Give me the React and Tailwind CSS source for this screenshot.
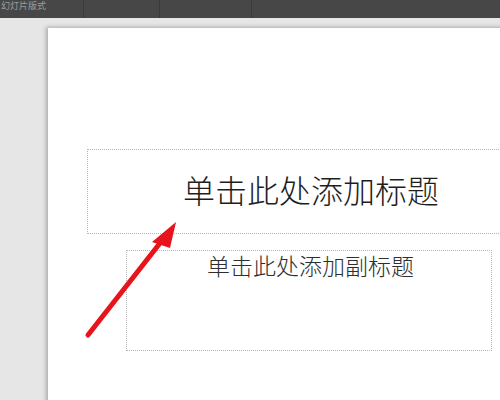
import React from "react";

const cjk = { fontFamily: '"Noto Sans CJK SC", "Noto Sans", sans-serif' };

const App = () => {
  return (
    <div className="w-[500px] h-[400px] overflow-hidden flex flex-col bg-[#e6e6e6]" style={cjk}>
      {/* Top toolbar strip */}
      <div className="h-[18px] shrink-0 bg-[#474747] flex">
        <div className="w-[84px] border-r border-[#3a3a3a]">
          <span className="block text-[9px] leading-[12px] text-[#9e9e9e] whitespace-nowrap pl-[1px]">
            幻灯片版式
          </span>
        </div>
        <div className="w-[76px] border-r border-[#3a3a3a]" />
        <div className="w-[92px] border-r border-[#3a3a3a]" />
        <div className="flex-1" />
      </div>

      {/* Workspace */}
      <div className="flex-1 pl-[48px] pt-[10px] overflow-hidden">
        <div className="relative w-[480px] h-[400px] bg-white shadow-[-2px_-1px_4px_rgba(0,0,0,0.25)] pt-[121px] pl-[39px]">
          {/* Title placeholder */}
          <div className="w-[430px] h-[85px] border border-dotted border-[#b5b5b5] flex items-center">
            <span className="ml-[95px] mt-[-6px] text-[32px] leading-none text-[#1e1e1e] font-light whitespace-nowrap">
              单击此处添加标题
            </span>
          </div>

          {/* Subtitle placeholder */}
          <div className="mt-[16px] ml-[39px] w-[366px] h-[101px] border border-dotted border-[#b5b5b5]">
            <div className="pl-[80px] pt-[1px] text-[23px] leading-[26px] text-[#2e2e2e] font-light whitespace-nowrap">
              单击此处添加副标题
            </div>
          </div>

          {/* Red pointer arrow */}
          <svg
            className="absolute left-0 top-0 pointer-events-none"
            width="480"
            height="380"
            viewBox="0 0 480 380"
          >
            <line
              x1="40"
              y1="307"
              x2="116"
              y2="210"
              stroke="#e8141b"
              strokeWidth="5"
              strokeLinecap="round"
            />
            <polygon points="128,194 104,214 122,220" fill="#e8141b" />
          </svg>
        </div>
      </div>
    </div>
  );
};

export default App;
